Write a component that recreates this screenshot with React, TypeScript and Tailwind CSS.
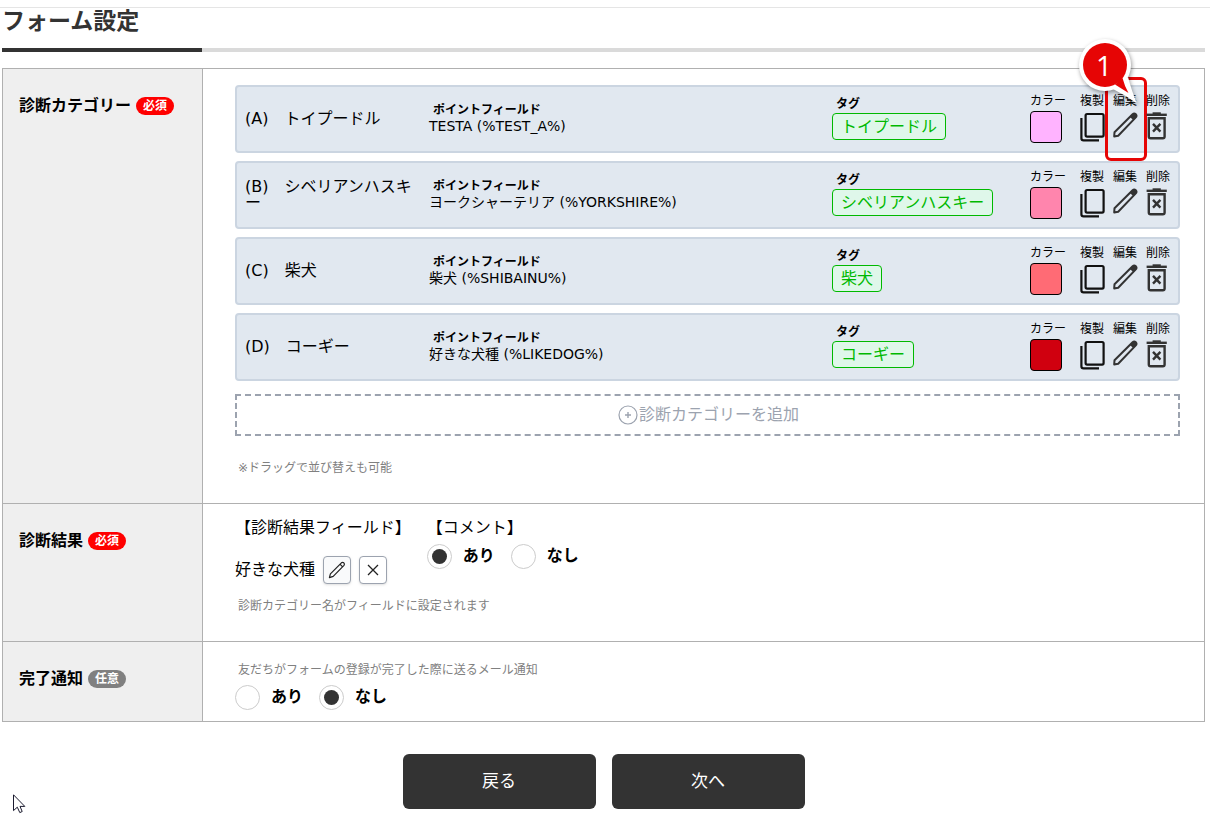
import React from 'react';

type Category = {
  key: string;
  name: string;
  field: string;
  color: string;
};

const categories: Category[] = [
  { key: 'A', name: 'トイプードル', field: 'TESTA (%TEST_A%)', color: 'bg-[#ffb3ff]' },
  { key: 'B', name: 'シベリアンハスキー', field: 'ヨークシャーテリア (%YORKSHIRE%)', color: 'bg-[#ff85ad]' },
  { key: 'C', name: '柴犬', field: '柴犬 (%SHIBAINU%)', color: 'bg-[#ff6b75]' },
  { key: 'D', name: 'コーギー', field: '好きな犬種 (%LIKEDOG%)', color: 'bg-[#d0000f]' },
];

function CopyIcon() {
  return (
    <svg viewBox="0 0 26 32" className="h-8 w-[26px]" fill="none" stroke="#111" aria-hidden="true">
      <rect x="5.6" y="3" width="18" height="22.6" rx="1.5" strokeWidth="2.2" />
      <path d="M1.4 7V27.3Q1.4 29.4 3.6 29.4H19" strokeWidth="2.2" />
    </svg>
  );
}

function PencilIcon() {
  return (
    <svg viewBox="0 0 26 32" className="h-8 w-[26px]" aria-hidden="true">
      <path
        d="M1.2 25.4L1.5 21.2L19.6 3.2Q21.2 1.8 22.8 3.2Q24.2 4.8 22.8 6.4L5.2 24.8Z"
        fill="none"
        stroke="#333"
        strokeWidth="2"
        strokeLinejoin="round"
      />
      <path d="M16.9 5.9L19.6 3.2Q21.2 1.8 22.8 3.2Q24.2 4.8 22.8 6.4L20.2 9.1Z" fill="#333" />
    </svg>
  );
}

function TrashIcon() {
  return (
    <svg viewBox="0 0 26 32" className="h-8 w-[26px]" fill="none" stroke="#333" aria-hidden="true">
      <path d="M.6 3.8H20.8" strokeWidth="2.4" />
      <path d="M6.6 2.4H14.8" strokeWidth="2.2" />
      <path d="M2.8 7.2V25.4Q2.8 27.2 4.6 27.2H16.8Q18.6 27.2 18.6 25.4V7.2Z" strokeWidth="2.4" />
      <path d="M7 12.8L14.4 20.6M14.4 12.8L7 20.6" strokeWidth="2.4" />
    </svg>
  );
}

function StepCallout() {
  return (
    <>
      <span className="pointer-events-none absolute -top-4 -left-2 h-[84px] w-[42px] rounded-md border-[3px] border-[#e60505]" />
      <span className="pointer-events-none absolute -top-[58px] -left-9 h-20 w-16">
        <svg viewBox="0 0 64 80" className="h-20 w-16 overflow-visible drop-shadow-[1px_2px_2px_rgba(0,0,0,0.4)]" aria-hidden="true">
          <g fill="#fff">
            <circle cx="28" cy="30" r="26" />
            <path d="M36 54Q48 60 60 68.5Q55 57 51 42Z" />
          </g>
          <g fill="#e60505">
            <circle cx="28" cy="30" r="22" />
            <path d="M38 49.5L51.5 58Q47.5 51 45.5 43Z" />
          </g>
        </svg>
        <span className="absolute inset-x-0 top-3.5 pr-2.5 text-center font-['Open_Sans',sans-serif] text-[28px] leading-8 text-white">1</span>
      </span>
    </>
  );
}

function Action({ label, children, callout }: { label: string; children: React.ReactNode; callout?: boolean }) {
  return (
    <button type="button" className="relative flex w-[26px] flex-col items-start gap-0.5 whitespace-nowrap text-left text-xs leading-4">
      <span>{label}</span>
      {children}
      {callout && <StepCallout />}
    </button>
  );
}

function CategoryCard({ item, callout }: { item: Category; callout: boolean }) {
  return (
    <li className="flex h-[68px] items-center rounded border-2 border-[#cbd5e1] bg-[#e1e8f0] pr-1.5 pb-0.5 pl-2">
      <p className="mr-2 w-[176px] shrink-0 break-all pt-0.5 text-base leading-4">
        ({item.key})　{item.name}
      </p>
      <div className="min-w-0 flex-1 text-sm leading-4">
        <p className="pl-1 text-xs leading-4 font-bold">ポイントフィールド</p>
        <p>{item.field}</p>
      </div>
      <div className="w-[198px] shrink-0">
        <p className="mb-px pl-1 text-xs leading-4 font-bold">タグ</p>
        <span className="inline-block rounded border border-[#00b900] bg-[#dff7ea] px-2 align-top text-base leading-[25px] whitespace-nowrap text-[#00b900]">
          {item.name}
        </span>
      </div>
      <div className="flex shrink-0 gap-[7px]">
        <button type="button" className="mr-[7px] flex w-9 flex-col items-start gap-0.5 text-xs leading-4 whitespace-nowrap">
          <span>カラー</span>
          <span className={`size-8 rounded border border-black ${item.color}`} />
        </button>
        <Action label="複製"><CopyIcon /></Action>
        <Action label="編集" callout={callout}><PencilIcon /></Action>
        <Action label="削除"><TrashIcon /></Action>
      </div>
    </li>
  );
}

function Row({ title, required, children }: { title: string; required?: boolean; children: React.ReactNode }) {
  return (
    <section className="flex border-b border-[#b0b0b0]">
      <h2 className="flex w-[200px] shrink-0 items-start gap-[5px] border-r border-[#b0b0b0] bg-[#efefef] pt-[25px] pl-4 text-base leading-6 font-bold">
        {title}
        <span className={`mt-[3px] rounded-full px-[7px] text-xs leading-[18px] text-white ${required ? 'bg-[#ff0000]' : 'bg-[#808080]'}`}>
          {required ? '必須' : '任意'}
        </span>
      </h2>
      <div className="min-w-0 flex-1 px-8 pr-6">{children}</div>
    </section>
  );
}

function Radios({ name, value }: { name: string; value: string }) {
  return (
    <div className="flex gap-4">
      {['あり', 'なし'].map((option) => (
        <label key={option} className="flex items-start text-base leading-6 font-bold">
          <input
            type="radio"
            name={name}
            defaultChecked={option === value}
            className="mr-[11px] grid size-[25px] appearance-none place-content-center rounded-full border border-[#ccc] bg-white before:size-[15px] before:rounded-full before:bg-[#333] before:opacity-0 before:content-[''] checked:before:opacity-100"
          />
          {option}
        </label>
      ))}
    </div>
  );
}

export default function App() {
  return (
    <main className="relative bg-white pt-[7px] font-['DejaVu_Sans','Noto_Sans_CJK_JP',sans-serif] text-black">
      <div className="border-t border-[#e5e5e5] pr-[5px] pl-0.5">
        <header className="flex border-b-4 border-[#dadada]">
          <h1 className="-mb-1 w-[200px] border-b-4 border-[#333] pb-3.5 text-[23px] leading-[26px] font-bold whitespace-nowrap text-[#333]">
            フォーム設定
          </h1>
        </header>

        <form className="mt-4" onSubmit={(e) => e.preventDefault()}>
          <div className="border border-b-0 border-[#b0b0b0]">
            <Row title="診断カテゴリー" required>
              <ul className="flex flex-col gap-2 pt-4">
                {categories.map((item, i) => (
                  <CategoryCard key={item.key} item={item} callout={i === 0} />
                ))}
              </ul>
              <button
                type="button"
                className="mt-[13px] flex h-[42px] w-full items-center justify-center border-2 border-dashed border-[#9ca3af] pl-0.5 text-base leading-6 text-[#9ca3af]"
              >
                <svg viewBox="0 0 20 20" className="size-5" fill="none" stroke="#9ca3af" aria-hidden="true">
                  <circle cx="10" cy="10" r="9" strokeWidth="1.2" />
                  <path d="M10 7V13M7 10H13" strokeWidth="1.4" />
                </svg>
                <span className="pl-px">診断カテゴリーを追加</span>
              </button>
              <p className="mt-[23px] pb-[26px] pl-[3px] text-xs leading-[18px] text-[#808080]">※ドラッグで並び替えも可能</p>
            </Row>

            <Row title="診断結果" required>
              <div className="flex gap-4 pt-3 text-base leading-6">
                <div>
                  <p>【診断結果フィールド】</p>
                  <div className="mt-4 flex items-center gap-2">
                    <span>好きな犬種</span>
                    <button type="button" aria-label="編集" className="grid size-7 place-content-center rounded-sm border border-[#9ca3af] bg-[#f9fafb] shadow-sm">
                      <svg viewBox="0 0 18 18" className="size-[18px]" fill="none" stroke="#222" strokeWidth="1.2" strokeLinejoin="round" aria-hidden="true">
                        <path d="M1.4 16.6L2.4 12.8L13.4 1.8Q14.6 .8 15.8 1.8Q17 3 16 4.4L5.2 15.4ZM12 3.2L14.6 5.8" />
                      </svg>
                    </button>
                    <button type="button" aria-label="削除" className="grid size-7 place-content-center rounded-sm border border-[#9ca3af] bg-white shadow-sm">
                      <svg viewBox="0 0 12 12" className="size-3" stroke="#222" strokeWidth="1.3" aria-hidden="true">
                        <path d="M1 1L11 11M11 1L1 11" />
                      </svg>
                    </button>
                  </div>
                </div>
                <div>
                  <p className="mb-1">【コメント】</p>
                  <Radios name="comment" value="あり" />
                </div>
              </div>
              <p className="mt-[13px] pb-[26px] pl-[3px] text-xs leading-[18px] text-[#808080]">診断カテゴリー名がフィールドに設定されます</p>
            </Row>

            <Row title="完了通知">
              <p className="mb-1.5 pt-[19px] pl-[3px] text-xs leading-[18px] text-[#808080]">友だちがフォームの登録が完了した際に送るメール通知</p>
              <div className="pb-[11px]">
                <Radios name="notice" value="なし" />
              </div>
            </Row>
          </div>

          <div className="flex justify-center gap-4 pt-8 pb-[9px]">
            <button type="button" className="h-[55px] w-[193px] rounded-md bg-[#333] pb-0.5 text-[17px] leading-6 text-white">戻る</button>
            <button type="submit" className="h-[55px] w-[193px] rounded-md bg-[#333] pb-0.5 text-[17px] leading-6 text-white">次へ</button>
          </div>
        </form>
      </div>

      <svg viewBox="0 0 13 20" className="pointer-events-none absolute bottom-1 left-[13px] h-5 w-[13px]" fill="#fff" stroke="#1a1a2e" aria-hidden="true">
        <path d="M.5 .8V16.6L4.3 13.2L6.8 18.6L9.2 17.5L7 12.4H11.8Z" strokeWidth="1" />
      </svg>
    </main>
  );
}
